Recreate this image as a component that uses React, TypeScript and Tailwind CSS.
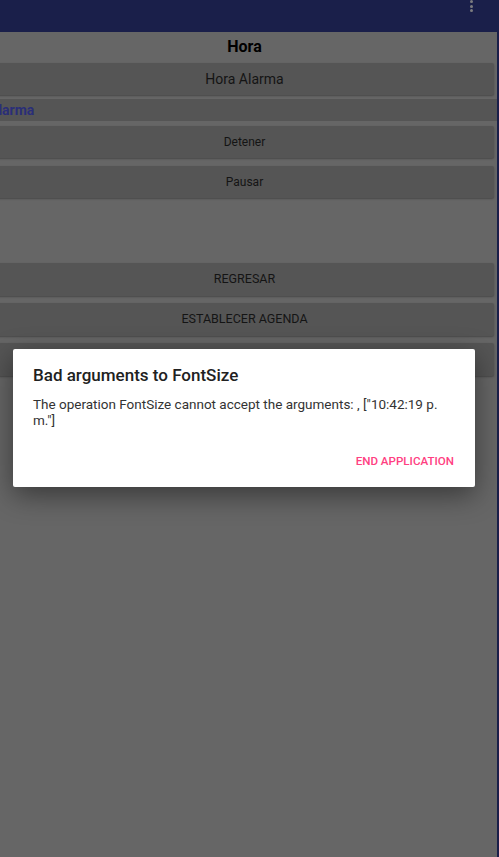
import React from "react";

function Btn({ children, className = "" }: { children: React.ReactNode; className?: string }) {
  return (
    <div
      className={
        "mx-[3px] h-[32px] flex items-center justify-center rounded-[2px] bg-[#555555] shadow-[0_1px_2px_rgba(0,0,0,0.3)] text-[#141414] " +
        className
      }
    >
      {children}
    </div>
  );
}

export default function App() {
  return (
    <div
      className="relative w-[499px] h-[857px] bg-[#1a1f4a] flex flex-col overflow-hidden"
      style={{ fontFamily: "Roboto, 'Noto Sans', sans-serif" }}
    >
      {/* top bar */}
      <div className="h-[32px] shrink-0 flex justify-end pr-[26px] bg-[#1a1f4a]">
        <div className="flex flex-col gap-[1.5px]">
          <div className="w-[3px] h-[3px] rounded-full bg-[#7d7d80]" />
          <div className="w-[3px] h-[3px] rounded-full bg-[#7d7d80]" />
          <div className="w-[3px] h-[3px] rounded-full bg-[#7d7d80]" />
        </div>
      </div>

      {/* main area */}
      <div className="w-[497px] flex-1 bg-[#666666] overflow-hidden">
        <div className="-ml-[8px] w-[505px] flex flex-col">
          <div className="h-[30px] flex items-center justify-center text-[16px] font-bold text-black">
            Hora
          </div>
          <Btn className="mt-[1px] text-[14px] text-[#1a1a1a]">Hora Alarma</Btn>
          <div className="mt-[4px] h-[22px] bg-[#555555] flex items-center">
            <span className="-ml-[3px] text-[14px] font-bold text-[#2a2e78]">Alarma</span>
          </div>
          <Btn className="mt-[5px] text-[12px]">Detener</Btn>
          <Btn className="mt-[8px] text-[12px]">Pausar</Btn>
          <div className="h-[65px]" />
          <Btn className="h-[33px] text-[12.5px]">REGRESAR</Btn>
          <Btn className="mt-[7px] h-[33px] text-[12.5px]">ESTABLECER AGENDA</Btn>
          <Btn className="mt-[7px] h-[33px] text-[12.5px]">{""}</Btn>
        </div>
      </div>

      {/* dialog */}
      <div className="absolute top-[349px] left-[13px] w-[462px] h-[138px] bg-white rounded-[2px] shadow-[0_8px_28px_rgba(0,0,0,0.45)] px-[20px] pt-[14px]">
        <div className="text-[17px] leading-[24px] font-medium text-[#212121]">
          Bad arguments to FontSize
        </div>
        <div className="mt-[9px] text-[13.5px] leading-[16px] text-[#333333]">
          The operation FontSize cannot accept the arguments: , ["10:42:19 p.
          <br />
          m."]
        </div>
        <div className="mt-[25px] flex justify-end pr-[1px]">
          <span className="text-[11.6px] leading-[16px] font-medium text-[#ff4081]">END APPLICATION</span>
        </div>
      </div>
    </div>
  );
}
